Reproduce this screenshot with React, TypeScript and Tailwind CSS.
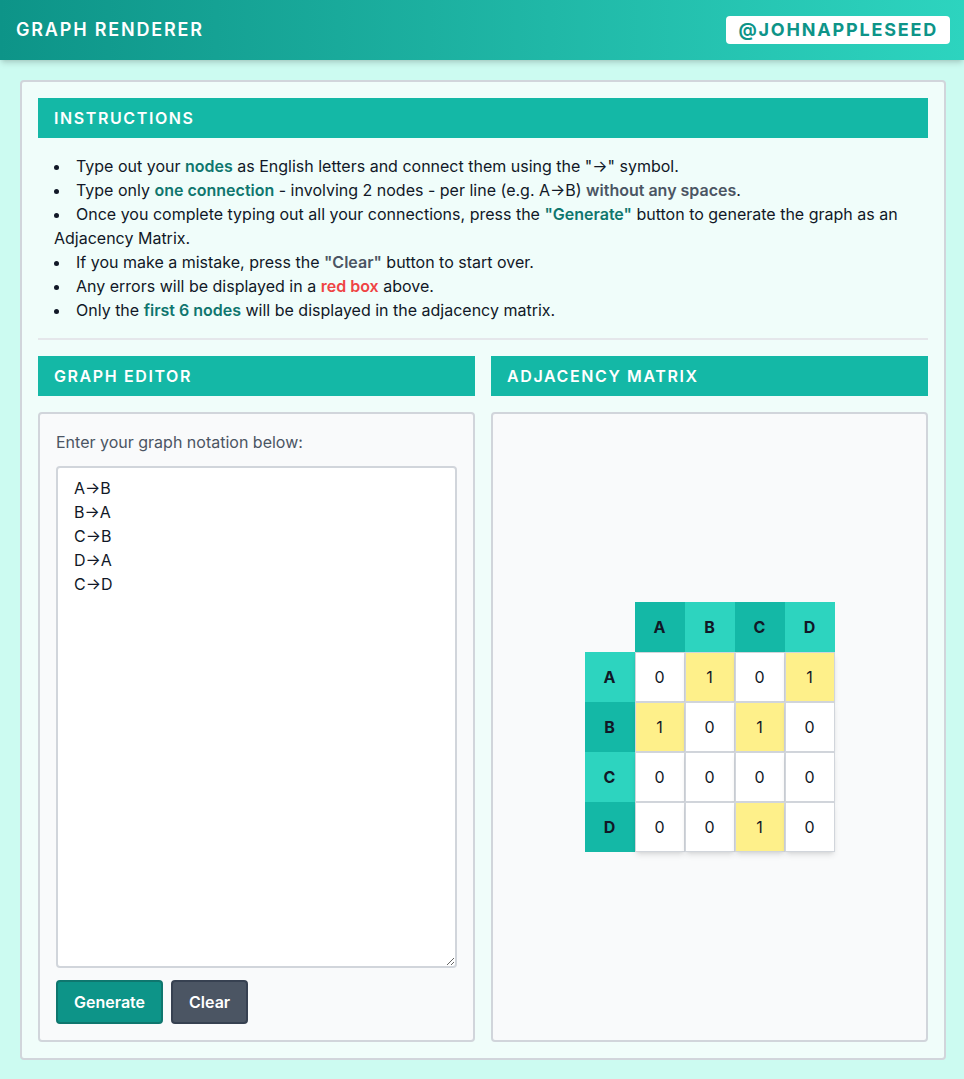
import React from "react";

const matrix = [
  [0, 1, 0, 1],
  [1, 0, 1, 0],
  [0, 0, 0, 0],
  [0, 0, 1, 0],
];
const labels = ["A", "B", "C", "D"];

export default function App() {
  return (
    <div
      className="min-h-screen flex flex-col bg-[#ccfbf1] text-[#111827]"
      style={{ fontFamily: "Inter, 'Noto Sans', sans-serif" }}
    >
      <header className="h-[60px] shrink-0 flex items-center justify-between pl-4 pr-[14px] bg-linear-to-r from-[#0d9488] to-[#2dd4bf] shadow-[0_4px_6px_-1px_rgba(0,0,0,0.15),0_2px_4px_-2px_rgba(0,0,0,0.1)]">
        <h1 className="text-white text-lg font-semibold tracking-widest">GRAPH RENDERER</h1>
        <div className="bg-white rounded px-3 h-7 flex items-center text-[#0d9488] text-lg font-bold tracking-widest">
          @JOHNAPPLESEED
        </div>
      </header>
      <main className="flex-1 flex flex-col pl-5 pr-[18px] pt-5 pb-[19px]">
        <div className="flex-1 flex flex-col bg-[#f0fdfa] border-2 border-[#d1d5db] rounded p-4">
          <div className="h-10 bg-[#14b8a6] flex items-center px-4 text-white font-semibold tracking-widest">
            INSTRUCTIONS
          </div>
          <ul className="list-disc list-inside mt-4 text-base leading-6 px-4">
            <li>
              Type out your <span className="font-semibold text-[#0f766e]">nodes</span> as English letters and connect them using the "→" symbol.
            </li>
            <li>
              Type only <span className="font-semibold text-[#0f766e]">one connection</span> - involving 2 nodes - per line (e.g. A→B){" "}
              <span className="font-semibold text-[#4b5563]">without any spaces</span>.
            </li>
            <li>
              Once you complete typing out all your connections, press the{" "}
              <span className="font-semibold text-[#0f766e]">"Generate"</span> button to generate the graph as an Adjacency Matrix.
            </li>
            <li>
              If you make a mistake, press the <span className="font-semibold text-[#4b5563]">"Clear"</span> button to start over.
            </li>
            <li>
              Any errors will be displayed in a <span className="font-semibold text-[#ef4444]">red box</span> above.
            </li>
            <li>
              Only the <span className="font-semibold text-[#0f766e]">first 6 nodes</span> will be displayed in the adjacency matrix.
            </li>
          </ul>
          <div className="my-4 border-t-2 border-[#e5e7eb]" />
          <div className="flex-1 grid grid-cols-2 gap-4">
            <div className="flex flex-col">
              <div className="h-10 bg-[#14b8a6] flex items-center px-4 text-white font-semibold tracking-widest">
                GRAPH EDITOR
              </div>
              <div className="flex-1 mt-4 flex flex-col bg-[#f9fafb] border-2 border-[#d1d5db] rounded p-4">
                <p className="text-[#4b5563] leading-6 mb-3">Enter your graph notation below:</p>
                <textarea
                  className="flex-1 w-full bg-white border-2 border-[#d1d5db] rounded px-4 py-2 leading-6 text-base text-[#111827] outline-none resize-y"
                  defaultValue={"A→B\nB→A\nC→B\nD→A\nC→D"}
                  style={{ fontFamily: "Inter, 'Noto Sans', sans-serif" }}
                />
                <div className="flex gap-2 mt-3">
                  <button className="bg-[#0d9488] border-2 border-[#0f766e] text-white font-semibold px-4 py-2 leading-6 rounded">
                    Generate
                  </button>
                  <button className="bg-[#4b5563] border-2 border-[#374151] text-white font-semibold px-4 py-2 leading-6 rounded">
                    Clear
                  </button>
                </div>
              </div>
            </div>
            <div className="flex flex-col">
              <div className="h-10 bg-[#14b8a6] flex items-center px-4 text-white font-semibold tracking-widest">
                ADJACENCY MATRIX
              </div>
              <div className="flex-1 mt-4 flex items-center justify-center bg-[#f9fafb] border-2 border-[#d1d5db] rounded">
                <div className="grid grid-cols-[50px_50px_50px_50px_50px]">
                  <div className="w-[50px] h-[50px]" />
                  {labels.map((l, i) => (
                    <div
                      key={l}
                      className={
                        "w-[50px] h-[50px] flex items-center justify-center font-bold " +
                        (i % 2 === 0 ? "bg-[#14b8a6]" : "bg-[#2dd4bf]")
                      }
                    >
                      {l}
                    </div>
                  ))}
                  {matrix.map((row, r) => (
                    <React.Fragment key={r}>
                      <div
                        className={
                          "w-[50px] h-[50px] flex items-center justify-center font-bold " +
                          (r % 2 === 0 ? "bg-[#2dd4bf]" : "bg-[#14b8a6]")
                        }
                      >
                        {labels[r]}
                      </div>
                      {row.map((v, c) => (
                        <div
                          key={c}
                          className={
                            "w-[50px] h-[50px] flex items-center justify-center border border-[#d1d5db] shadow-[0_4px_6px_-1px_rgba(0,0,0,0.1),0_2px_4px_-2px_rgba(0,0,0,0.1)] " +
                            (v ? "bg-[#fef08a]" : "bg-white")
                          }
                        >
                          {v}
                        </div>
                      ))}
                    </React.Fragment>
                  ))}
                </div>
              </div>
            </div>
          </div>
        </div>
      </main>
    </div>
  );
}
